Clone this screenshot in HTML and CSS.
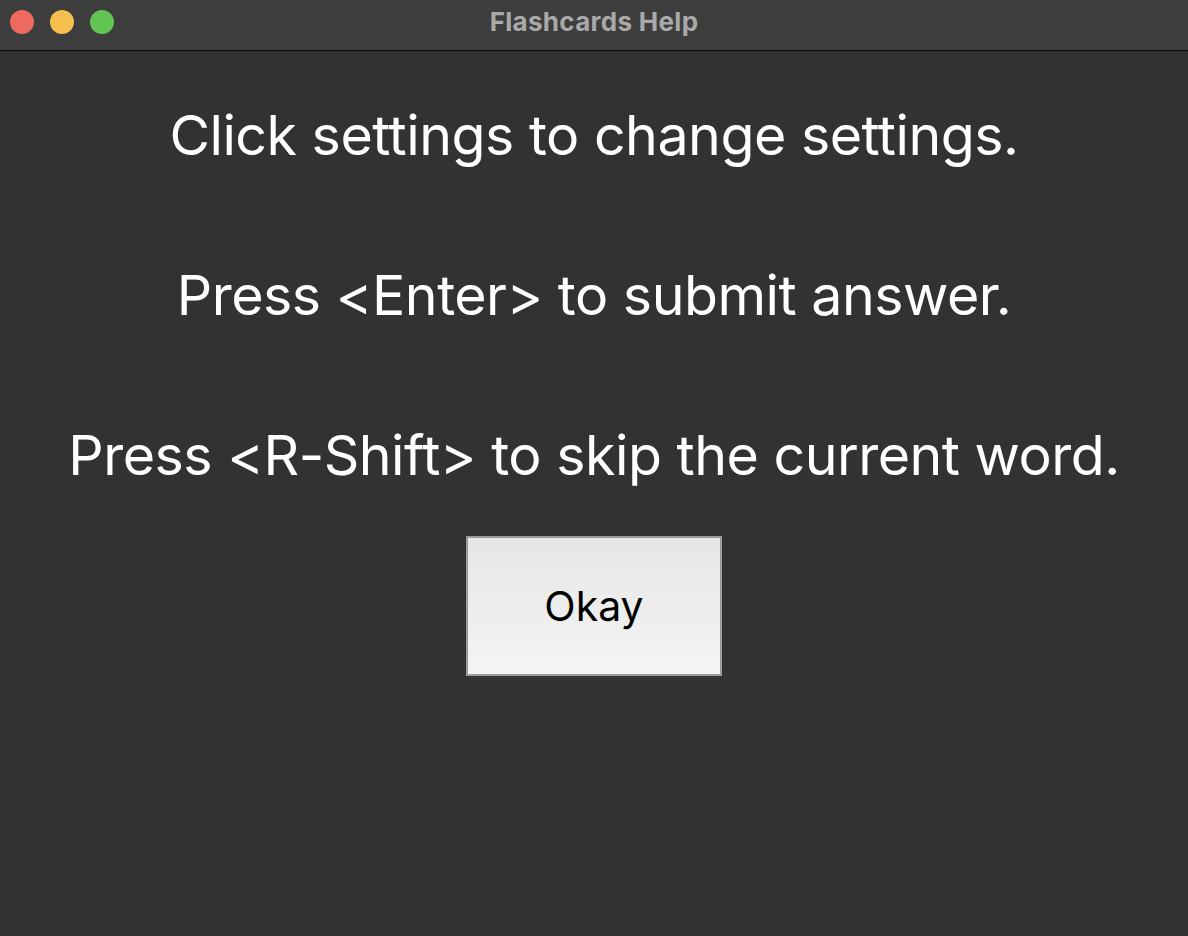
FILE: index.html
```html
<!DOCTYPE html>
<html>
<head>
<meta charset="utf-8">
<link rel="stylesheet" href="styles.css">
</head>
<body>
<div class="window">
  <div class="titlebar">
    <div class="lights">
      <span class="light red"></span>
      <span class="light yellow"></span>
      <span class="light green"></span>
    </div>
    <div class="title">Flashcards Help</div>
  </div>
  <div class="content">
    <p class="line">Click settings to change settings.</p>
    <p class="line">Press &lt;Enter&gt; to submit answer.</p>
    <p class="line">Press &lt;R-Shift&gt; to skip the current word.</p>
    <button class="okay">Okay</button>
  </div>
</div>
</body>
</html>
```
FILE: styles.css
```css
html, body {
  margin: 0;
  padding: 0;
  background: #323232;
}
.window {
  width: 1188px;
  height: 936px;
  display: flex;
  flex-direction: column;
  background: #323232;
  font-family: Inter, "Noto Sans", sans-serif;
}
.titlebar {
  position: relative;
  height: 50px;
  background: #3d3d3d;
  border-bottom: 1px solid #0e0e0e;
  display: flex;
  align-items: center;
  justify-content: center;
}
.lights {
  position: absolute;
  left: 10px;
  top: 10px;
  display: flex;
  gap: 16px;
}
.light {
  width: 24px;
  height: 24px;
  border-radius: 50%;
}
.red { background: #ed6a5e; }
.yellow { background: #f5bf4f; }
.green { background: #61c554; }
.title {
  color: #a9a9a9;
  font-weight: 700;
  font-size: 26px;
  letter-spacing: 0.3px;
  margin-top: -8px;
}
.content {
  display: flex;
  flex-direction: column;
  align-items: center;
  padding-top: 50px;
}
.line {
  margin: 0;
  color: #ffffff;
  font-size: 55.5px;
  line-height: 68px;
  height: 160px;
  letter-spacing: -0.5px;
}
.okay {
  margin-top: -45px;
  width: 256px;
  height: 140px;
  border: 2px solid #9b9b9b;
  background: linear-gradient(#e6e6e6, #f4f4f4);
  font-family: Inter, "Noto Sans", sans-serif;
  font-size: 41px;
  color: #000;
  padding: 0;
}
```
